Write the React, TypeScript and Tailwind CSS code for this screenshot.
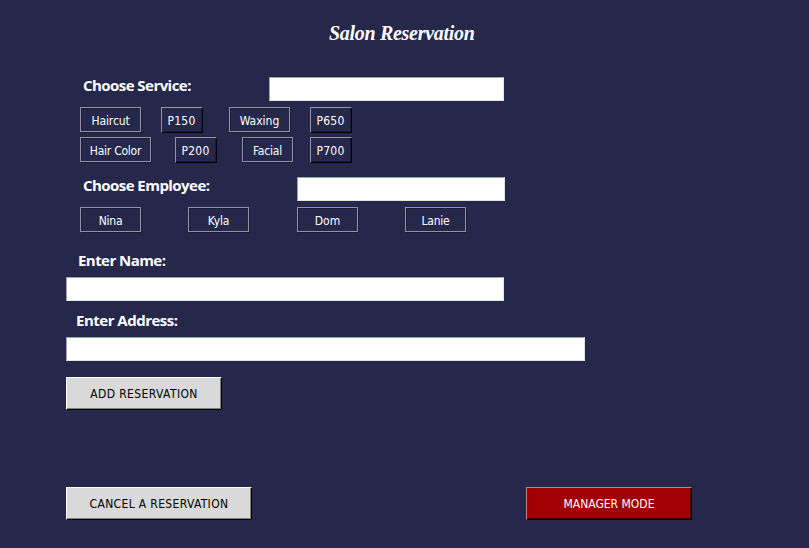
import type { ReactNode } from 'react';

const uiFont = "font-['DejaVu_Sans_Condensed','DejaVu_Sans',sans-serif] [font-stretch:condensed]";

function Label({ children, className }: { children: ReactNode; className: string }) {
  return (
    <span className={`block whitespace-nowrap font-['Open_Sans',sans-serif] text-[15px] leading-[16px] font-bold text-white ${className}`}>
      {children}
    </span>
  );
}

function Entry({ label, className }: { label: string; className: string }) {
  return (
    <input
      aria-label={label}
      className={`block h-6 shrink-0 border border-t-[#a0a0a0] border-l-[#a0a0a0] border-r-[#e3e3e3] border-b-[#e3e3e3] bg-white outline-none ${className}`}
    />
  );
}

function GrooveButton({ children, className }: { children: ReactNode; className: string }) {
  return (
    <button
      className={`block h-[25px] shrink-0 border border-[#9292a4] pt-px text-center text-[12px] leading-[24px] whitespace-nowrap text-white shadow-[1px_1px_0_#1b1b35,inset_1px_1px_0_#1b1b35] ${uiFont} ${className}`}
    >
      {children}
    </button>
  );
}

function PriceButton({ children, className }: { children: ReactNode; className: string }) {
  return (
    <button
      className={`block h-[26px] w-[42px] shrink-0 border border-t-[#9292a4] border-l-[#9292a4] border-r-black border-b-black pt-px pr-px text-center text-[12px] leading-[24px] tracking-[0.2px] whitespace-nowrap text-white shadow-[inset_-1px_-1px_0_#1b1b35] ${uiFont} ${className}`}
    >
      {children}
    </button>
  );
}

function ActionButton({ children, className }: { children: ReactNode; className: string }) {
  return (
    <button className={`block h-[33px] shrink-0 border border-r-black border-b-black pt-px text-center text-[12px] leading-[31px] whitespace-nowrap ${uiFont} ${className}`}>
      {children}
    </button>
  );
}

export default function App() {
  return (
    <main className="h-[548px] w-[809px] overflow-hidden bg-[#26284b]">
      <h1 className="h-[77px] pt-[21px] pl-[329px] font-['Liberation_Serif',serif] text-[20px] leading-[25px] font-bold tracking-[-0.3px] whitespace-nowrap text-white italic">
        Salon Reservation
      </h1>

      <section className="h-[100px]">
        <div className="flex h-[30px] pl-[83px]">
          <Label className="w-[186px] tracking-[-0.55px]">Choose Service:</Label>
          <Entry label="Service" className="w-[235px]" />
        </div>
        <div className="flex h-[30px] pl-[80px]">
          <GrooveButton className="w-[61px] tracking-[-0.1px]">Haircut</GrooveButton>
          <PriceButton className="ml-5">P150</PriceButton>
          <GrooveButton className="ml-[26px] w-[61px]">Waxing</GrooveButton>
          <PriceButton className="ml-5">P650</PriceButton>
        </div>
        <div className="flex h-[40px] pl-[80px]">
          <GrooveButton className="w-[71px] tracking-[-0.25px]">Hair Color</GrooveButton>
          <PriceButton className="ml-6">P200</PriceButton>
          <GrooveButton className="ml-[25px] w-[51px] tracking-[-0.2px]">Facial</GrooveButton>
          <PriceButton className="ml-[17px]">P700</PriceButton>
        </div>
      </section>

      <section className="h-[75px]">
        <div className="flex h-[30px] pl-[83px]">
          <Label className="w-[214px] tracking-[-0.55px]">Choose Employee:</Label>
          <Entry label="Employee" className="w-[208px]" />
        </div>
        <div className="flex pl-[80px]">
          <GrooveButton className="w-[61px] tracking-[-0.2px]">Nina</GrooveButton>
          <GrooveButton className="ml-[47px] w-[61px] tracking-[-0.2px]">Kyla</GrooveButton>
          <GrooveButton className="ml-[48px] w-[61px]">Dom</GrooveButton>
          <GrooveButton className="ml-[47px] w-[61px] tracking-[-0.2px]">Lanie</GrooveButton>
        </div>
      </section>

      <section className="h-[125px] pl-[66px]">
        <Label className="h-[25px] pl-3 tracking-[-0.55px]">Enter Name:</Label>
        <Entry label="Name" className="w-[438px]" />
        <Label className="mt-[11px] h-[25px] pl-[10px] tracking-[-0.5px]">Enter Address:</Label>
        <Entry label="Address" className="w-[519px]" />
      </section>

      <ActionButton className="ml-[66px] w-[156px] border-t-white border-l-white bg-[#d9d9d9] tracking-[0.4px] text-black shadow-[inset_-1px_-1px_0_#808080]">
        ADD RESERVATION
      </ActionButton>
      <div className="mt-[77px] flex pl-[66px]">
        <ActionButton className="w-[186px] border-t-white border-l-white bg-[#d9d9d9] tracking-[0.35px] text-black shadow-[inset_-1px_-1px_0_#808080]">
          CANCEL A RESERVATION
        </ActionButton>
        <ActionButton className="ml-[274px] w-[166px] border-t-[#d67c7c] border-l-[#d67c7c] bg-[#a00000] text-white shadow-[inset_-1px_-1px_0_#500000]">
          MANAGER MODE
        </ActionButton>
      </div>
    </main>
  );
}
